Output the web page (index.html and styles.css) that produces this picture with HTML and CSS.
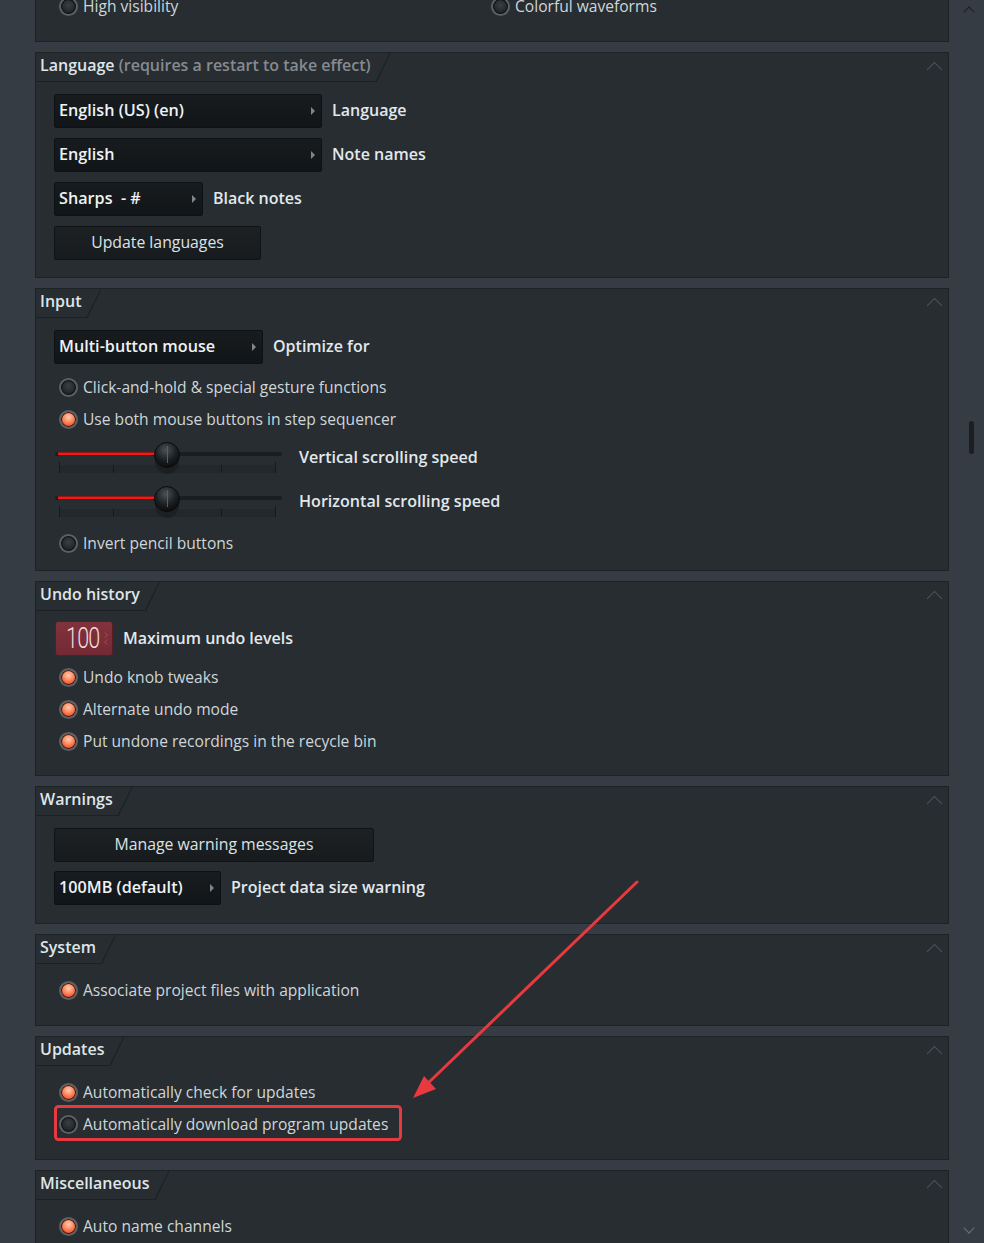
FILE: index.html
```html
<!DOCTYPE html>
<html>
<head>
<meta charset="utf-8">
<link rel="stylesheet" href="styles.css">
</head>
<body>
<div class="page">
  <div class="main">
    <section class="panel panel-top">
      <div class="body body-top">
        <div class="row two">
          <div class="radio-row col1"><span class="radio"></span><span class="rlabel">High visibility</span></div>
          <div class="radio-row"><span class="radio"></span><span class="rlabel">Colorful waveforms</span></div>
        </div>
      </div>
    </section>

    <section class="panel">
      <header class="head">
        <div class="tabwrap"><div class="tab">Language <span class="muted">(requires a restart to take effect)</span></div></div>
        <span class="collapse"></span>
      </header>
      <div class="body b-lang">
        <div class="ctl"><div class="dd w268"><span>English (US) (en)</span><i class="tri"></i></div><span class="clabel">Language</span></div>
        <div class="ctl"><div class="dd w268"><span>English</span><i class="tri"></i></div><span class="clabel">Note names</span></div>
        <div class="ctl"><div class="dd w149"><span>Sharps &nbsp;- #</span><i class="tri"></i></div><span class="clabel">Black notes</span></div>
        <div class="ctl"><div class="btn w207">Update languages</div></div>
      </div>
    </section>

    <section class="panel">
      <header class="head">
        <div class="tabwrap"><div class="tab">Input</div></div>
        <span class="collapse"></span>
      </header>
      <div class="body b-input">
        <div class="ctl"><div class="dd w209"><span>Multi-button mouse</span><i class="tri"></i></div><span class="clabel">Optimize for</span></div>
        <div class="radio-row first7"><span class="radio"></span><span class="rlabel">Click-and-hold &amp; special gesture functions</span></div>
        <div class="radio-row"><span class="radio on"></span><span class="rlabel">Use both mouse buttons in step sequencer</span></div>
        <div class="slider-row">
          <svg class="slider" width="230" height="44" viewBox="0 0 230 44">
            <defs>
              <radialGradient id="kg" cx="0.45" cy="0.3" r="0.75">
                <stop offset="0" stop-color="#4a5055"/>
                <stop offset="0.55" stop-color="#1c2023"/>
                <stop offset="1" stop-color="#08090a"/>
              </radialGradient>
            </defs>
            <rect x="6" y="30" width="216" height="8" fill="#22282b"/>
            <g stroke="#171a1c" stroke-width="1">
              <line x1="6.5" y1="27" x2="6.5" y2="38"/>
              <line x1="60.5" y1="30" x2="60.5" y2="38"/>
              <line x1="114.5" y1="30" x2="114.5" y2="38"/>
              <line x1="168.5" y1="30" x2="168.5" y2="38"/>
              <line x1="222.5" y1="27" x2="222.5" y2="38"/>
            </g>
            <rect x="2" y="17" width="227" height="4" rx="2" fill="#1a1e21"/>
            <rect x="5" y="17.5" width="100" height="2.5" fill="#ff1414"/>
            <ellipse cx="114" cy="26" rx="12" ry="13" fill="#1a1e20" opacity="0.8"/>
            <circle cx="114" cy="20" r="12.5" fill="url(#kg)" stroke="#0a0c0d" stroke-width="1"/>
            <line x1="114.5" y1="11" x2="114.5" y2="28" stroke="#ff1a1a" stroke-width="1"/>
          </svg>
          <span class="clabel slabel">Vertical scrolling speed</span>
        </div>
        <div class="slider-row">
          <svg class="slider" width="230" height="44" viewBox="0 0 230 44">
            <rect x="6" y="30" width="216" height="8" fill="#22282b"/>
            <g stroke="#171a1c" stroke-width="1">
              <line x1="6.5" y1="27" x2="6.5" y2="38"/>
              <line x1="60.5" y1="30" x2="60.5" y2="38"/>
              <line x1="114.5" y1="30" x2="114.5" y2="38"/>
              <line x1="168.5" y1="30" x2="168.5" y2="38"/>
              <line x1="222.5" y1="27" x2="222.5" y2="38"/>
            </g>
            <rect x="2" y="17" width="227" height="4" rx="2" fill="#1a1e21"/>
            <rect x="5" y="17.5" width="100" height="2.5" fill="#ff1414"/>
            <ellipse cx="114" cy="26" rx="12" ry="13" fill="#1a1e20" opacity="0.8"/>
            <circle cx="114" cy="20" r="12.5" fill="url(#kg)" stroke="#0a0c0d" stroke-width="1"/>
            <line x1="114.5" y1="11" x2="114.5" y2="28" stroke="#ff1a1a" stroke-width="1"/>
          </svg>
          <span class="clabel slabel">Horizontal scrolling speed</span>
        </div>
        <div class="radio-row first4"><span class="radio"></span><span class="rlabel">Invert pencil buttons</span></div>
      </div>
    </section>

    <section class="panel">
      <header class="head">
        <div class="tabwrap"><div class="tab">Undo history</div></div>
        <span class="collapse"></span>
      </header>
      <div class="body b-undo">
        <div class="ctl num-row">
          <div class="numbox"><span class="num">100</span>
            <svg class="arrows" width="6" height="15" viewBox="0 0 6 15"><path d="M1.5 1.5 L4.5 4 L1.5 6.5 M4.5 8.5 L1.5 11 L4.5 13.5" fill="none" stroke="#a84656" stroke-width="1"/></svg>
          </div>
          <span class="clabel">Maximum undo levels</span>
        </div>
        <div class="radio-row first5"><span class="radio on"></span><span class="rlabel">Undo knob tweaks</span></div>
        <div class="radio-row"><span class="radio on"></span><span class="rlabel">Alternate undo mode</span></div>
        <div class="radio-row"><span class="radio on"></span><span class="rlabel">Put undone recordings in the recycle bin</span></div>
      </div>
    </section>

    <section class="panel">
      <header class="head">
        <div class="tabwrap"><div class="tab">Warnings</div></div>
        <span class="collapse"></span>
      </header>
      <div class="body b-warn">
        <div class="ctl"><div class="btn w320">Manage warning messages</div></div>
        <div class="ctl gap9"><div class="dd w167"><span>100MB (default)</span><i class="tri"></i></div><span class="clabel">Project data size warning</span></div>
      </div>
    </section>

    <section class="panel">
      <header class="head">
        <div class="tabwrap"><div class="tab">System</div></div>
        <span class="collapse"></span>
      </header>
      <div class="body b-radio">
        <div class="radio-row"><span class="radio on"></span><span class="rlabel">Associate project files with application</span></div>
      </div>
    </section>

    <section class="panel">
      <header class="head">
        <div class="tabwrap"><div class="tab">Updates</div></div>
        <span class="collapse"></span>
      </header>
      <div class="body b-radio">
        <div class="radio-row"><span class="radio on"></span><span class="rlabel">Automatically check for updates</span></div>
        <div class="radio-row"><span class="radio"></span><span class="rlabel">Automatically download program updates</span></div>
      </div>
    </section>

    <section class="panel">
      <header class="head">
        <div class="tabwrap"><div class="tab">Miscellaneous</div></div>
        <span class="collapse"></span>
      </header>
      <div class="body b-radio">
        <div class="radio-row"><span class="radio on"></span><span class="rlabel">Auto name channels</span></div>
      </div>
    </section>
  </div>

  <aside class="scrollbar">
    <span class="sb-up"></span>
    <span class="sb-thumb"></span>
    <span class="sb-down"></span>
  </aside>

  <svg class="annot" width="984" height="1243" viewBox="0 0 984 1243">
    <rect x="55.5" y="1106.5" width="345" height="33" rx="3" fill="none" stroke="#e8393f" stroke-width="3"/>
    <line x1="637" y1="882" x2="424" y2="1087" stroke="#e8393f" stroke-width="3" stroke-linecap="round"/>
    <polygon points="413,1098 424,1076 436,1089" fill="#e8393f"/>
  </svg>
</div>
</body>
</html>
```

FILE: styles.css
```css
html, body {
  margin: 0;
  padding: 0;
  background: #363c43;
}
.page {
  position: relative;
  display: flex;
  width: 984px;
  height: 1243px;
  overflow: hidden;
  font-family: "Open Sans", "Noto Sans", sans-serif;
  color: #d3dade;
}
.main {
  width: 914px;
  padding-left: 35px;
  display: flex;
  flex-direction: column;
}
.panel {
  flex: none;
  background: #272d31;
  border: 1px solid #1d2225;
  margin-bottom: 10px;
  display: flex;
  flex-direction: column;
}
.panel-top {
  margin-top: -11px;
}
.body-top {
  padding: 0 0 19px 0;
}
.row.two {
  display: flex;
  height: 32px;
}
.col1 {
  width: 427px;
}

/* header */
.head {
  height: 29px;
  display: flex;
  justify-content: space-between;
  align-items: flex-start;
}
.tabwrap {
  height: 29px;
  background: #1c2124;
  clip-path: polygon(0 0, 100% 0, calc(100% - 14px) 100%, 0 100%);
  padding-right: 1px;
}
.tab {
  height: 28px;
  box-sizing: border-box;
  padding: 2px 19px 0 4px;
  background: #272d31;
  clip-path: polygon(0 0, 100% 0, calc(100% - 14px) 100%, 0 100%);
  font-size: 16px;
  font-weight: 600;
  color: #dfe5e9;
  line-height: 20px;
  white-space: nowrap;
}
.muted {
  color: #858b90;
}
.collapse {
  width: 11px;
  height: 11px;
  margin: 11px 8px 0 0;
  border-left: 1.5px solid #4d545a;
  border-top: 1.5px solid #4d545a;
  transform: rotate(45deg);
  transform-origin: center;
  box-sizing: border-box;
}

/* body */
.body {
  display: flex;
  flex-direction: column;
  padding-left: 18px;
}
.b-lang { padding-top: 12px; padding-bottom: 17px; gap: 10px; }
.b-input { padding-top: 12px; padding-bottom: 11px; }
.b-undo { padding-top: 10px; padding-bottom: 18px; }
.b-warn { padding-top: 12px; padding-bottom: 18px; }
.b-radio { padding-top: 10px; padding-bottom: 19px; }

.ctl {
  display: flex;
  align-items: center;
  height: 34px;
}
.gap9 { margin-top: 9px; }
.dd {
  height: 34px;
  box-sizing: border-box;
  display: flex;
  align-items: center;
  justify-content: space-between;
  padding: 0 6px 2px 4px;
  background: linear-gradient(#181c1f, #121518);
  border: 1px solid #0e1113;
  border-radius: 2px;
  font-size: 16.2px;
  font-weight: 600;
  color: #eef2f4;
  white-space: nowrap;
}
.tri {
  width: 0;
  height: 0;
  margin-top: 2px;
  border-top: 4px solid transparent;
  border-bottom: 4px solid transparent;
  border-left: 4px solid #80868b;
}
.w268 { width: 268px; }
.w149 { width: 149px; }
.w209 { width: 209px; }
.w167 { width: 167px; }
.w207 { width: 207px; }
.w320 { width: 320px; }
.btn {
  height: 34px;
  box-sizing: border-box;
  display: flex;
  align-items: center;
  justify-content: center;
  padding-bottom: 2px;
  background: linear-gradient(#1d2124, #181b1e);
  border: 1px solid #101315;
  border-radius: 2px;
  font-size: 15.8px;
  color: #dbe2e6;
}
.clabel {
  margin-left: 10px;
  margin-bottom: 2px;
  font-size: 16px;
  font-weight: 600;
  color: #e2e8eb;
  white-space: nowrap;
}

/* radios */
.radio-row {
  height: 32px;
  display: flex;
  align-items: center;
  padding-left: 5px;
  flex: none;
}
.first7 { margin-top: 7px; }
.first5 { margin-top: 5px; }
.first4 { margin-top: 4px; }
.radio {
  width: 19px;
  height: 19px;
  box-sizing: border-box;
  border-radius: 50%;
  border: 2px solid #5b6064;
  background: radial-gradient(circle at 50% 40%, #3a3f43 0%, #25292c 55%, #151719 100%);
  box-shadow: inset 0 0 0 1px #0c0e0f;
  flex: none;
}
.radio.on {
  background: radial-gradient(circle at 50% 35%, #ffd0b8 0%, #ff9a72 30%, #f0603a 65%, #b8321a 100%);
  box-shadow: inset 0 0 0 1px #3a120a;
}
.rlabel {
  margin-left: 5px;
  font-size: 15.6px;
  color: #cfd6da;
  white-space: nowrap;
}

/* sliders */
.slider-row {
  height: 44px;
  display: flex;
  align-items: center;
  flex: none;
}
.slider {
  display: block;
  margin-left: -1px;
  flex: none;
}
.slabel {
  margin-left: 16px;
  margin-bottom: 0;
  font-size: 16.1px;
}

/* numbox */
.numbox {
  width: 58px;
  height: 35px;
  box-sizing: border-box;
  display: flex;
  align-items: center;
  padding-left: 10px;
  padding-right: 3px;
  background: linear-gradient(#82323d, #722a34);
  border: 1px solid #5a1c25;
  border-radius: 3px;
  margin-left: 1px;
}
.num-row { height: 35px; }
.num {
  display: inline-block;
  width: 34px;
  white-space: nowrap;
  font-family: "Roboto", sans-serif;
  font-weight: 300;
  font-size: 29px;
  letter-spacing: -1px;
  color: #f4dadc;
  line-height: 1;
  transform: scaleX(0.74);
  transform-origin: left center;
}
.arrows {
  display: block;
  margin-left: auto;
  flex: none;
}
.num-row .clabel { margin-left: 10px; }

/* scrollbar */
.scrollbar {
  width: 35px;
  position: relative;
  flex: none;
}
.sb-up, .sb-down {
  position: absolute;
  left: 16px;
  width: 8px;
  height: 8px;
  box-sizing: border-box;
  transform: rotate(45deg);
}
.sb-up {
  top: 8px;
  border-left: 1.5px solid #1c2024;
  border-top: 1.5px solid #1c2024;
}
.sb-down {
  top: 1224px;
  border-right: 1.5px solid #6b7177;
  border-bottom: 1.5px solid #6b7177;
}
.sb-thumb {
  position: absolute;
  left: 20px;
  top: 421px;
  width: 5px;
  height: 33px;
  border-radius: 3px;
  background: #1b1f23;
}

.annot {
  position: absolute;
  left: 0;
  top: 0;
  pointer-events: none;
}
```
